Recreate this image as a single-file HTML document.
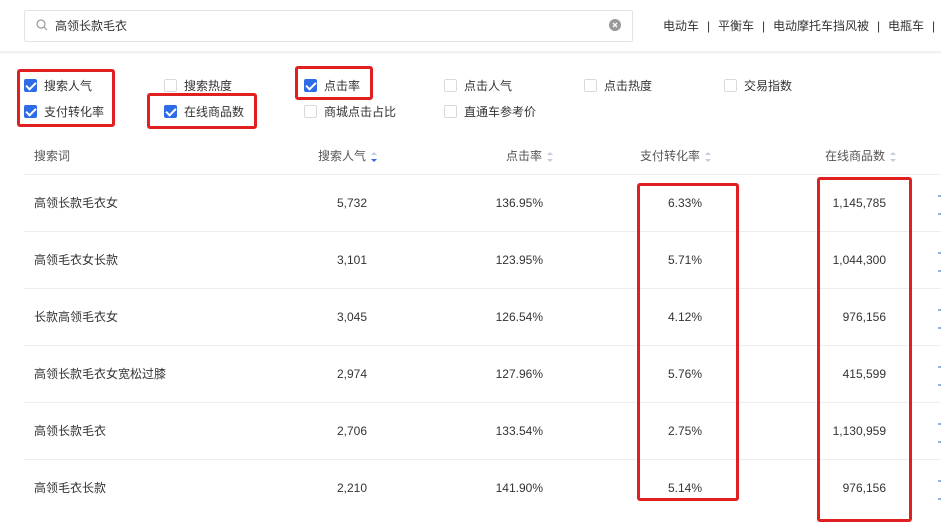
<!DOCTYPE html>
<html><head><meta charset="utf-8"><style>
*{margin:0;padding:0;box-sizing:border-box}
body{width:941px;height:516px;overflow:hidden;background:#fff;position:relative;font-family:"Liberation Sans","Noto Sans CJK SC",sans-serif;font-size:12px;color:#333}
.a{position:absolute;white-space:nowrap;line-height:16px}
.search{position:absolute;left:24px;top:10px;width:609px;height:32px;border:1px solid #e3e3e3;border-radius:2px}
.sh{position:absolute;left:0;top:51px;width:941px;height:3px;background:linear-gradient(#eee,#fafafa)}
.cb{position:absolute;width:13px;height:13px;border:1px solid #d9d9d9;border-radius:2px;background:#fff}
.cb.on{background:#2e6be6;border-color:#2e6be6}
.cb.on:after{content:"";position:absolute;left:3px;top:0px;width:4px;height:8px;border:solid #fff;border-width:0 2px 2px 0;transform:rotate(45deg)}
.red{position:absolute;border:3px solid #e02020;border-radius:3px}
.hl{position:absolute;left:24px;width:917px;height:1px;background:#eeeeee}
.r{text-align:right}
.sort{display:inline-block;width:6px;height:10px;vertical-align:middle;margin-left:5px;position:relative}
.sort:before{content:"";position:absolute;top:0;left:0;border:3px solid transparent;border-bottom:3px solid #c5cddb;border-top:0}
.sort:after{content:"";position:absolute;bottom:0;left:0;border:3px solid transparent;border-top:3px solid #c5cddb;border-bottom:0}
.sort.b:after{border-top-color:#2e6be6}
.blu{position:absolute;left:938px;width:3px;height:2px;background:#8fb1e8}
.sep{display:inline-block;width:19px;text-align:center}
</style></head><body>
<div class="search"></div>
<svg class="a" style="left:36px;top:19px" width="12" height="12" viewBox="0 0 12 12"><circle cx="5" cy="5" r="4" fill="none" stroke="#999" stroke-width="1.2"/><path d="M8 8l3 3" stroke="#999" stroke-width="1.2"/></svg>
<div class="a" style="left:55px;top:18px;color:#333">高领长款毛衣</div>
<svg class="a" style="left:609px;top:19px" width="12" height="12" viewBox="0 0 12 12"><circle cx="6" cy="6" r="6" fill="#999"/><path d="M4 4l4 4M8 4l-4 4" stroke="#fff" stroke-width="1.3"/></svg>
<div class="a" style="left:663px;top:18px;color:#333">电动车<span class="sep">|</span>平衡车<span class="sep">|</span>电动摩托车挡风被<span class="sep">|</span>电瓶车<span class="sep">|</span></div>
<div class="sh"></div>

<div class="cb on" style="left:24px;top:79px"></div><div class="a" style="left:44px;top:78px">搜索人气</div>
<div class="cb" style="left:164px;top:79px"></div><div class="a" style="left:184px;top:78px">搜索热度</div>
<div class="cb on" style="left:304px;top:79px"></div><div class="a" style="left:324px;top:78px">点击率</div>
<div class="cb" style="left:444px;top:79px"></div><div class="a" style="left:464px;top:78px">点击人气</div>
<div class="cb" style="left:584px;top:79px"></div><div class="a" style="left:604px;top:78px">点击热度</div>
<div class="cb" style="left:724px;top:79px"></div><div class="a" style="left:744px;top:78px">交易指数</div>
<div class="cb on" style="left:24px;top:105px"></div><div class="a" style="left:44px;top:104px">支付转化率</div>
<div class="cb on" style="left:164px;top:105px"></div><div class="a" style="left:184px;top:104px">在线商品数</div>
<div class="cb" style="left:304px;top:105px"></div><div class="a" style="left:324px;top:104px">商城点击占比</div>
<div class="cb" style="left:444px;top:105px"></div><div class="a" style="left:464px;top:104px">直通车参考价</div>

<div class="a" style="left:34px;top:148px;color:#555">搜索词</div>
<div class="a" style="left:318px;top:148px;color:#555">搜索人气<span class="sort b"></span></div>
<div class="a" style="left:506px;top:148px;color:#555">点击率<span class="sort"></span></div>
<div class="a" style="left:640px;top:148px;color:#555">支付转化率<span class="sort"></span></div>
<div class="a" style="left:825px;top:148px;color:#555">在线商品数<span class="sort"></span></div>

<div class="hl" style="top:174px"></div>
<div class="hl" style="top:231px"></div>
<div class="hl" style="top:288px"></div>
<div class="hl" style="top:345px"></div>
<div class="hl" style="top:402px"></div>
<div class="hl" style="top:459px"></div>

<div class="a" style="left:34px;top:195px">高领长款毛衣女</div><div class="a r" style="right:574px;top:195px">5,732</div><div class="a r" style="right:398px;top:195px">136.95%</div><div class="a r" style="right:239px;top:195px">6.33%</div><div class="a r" style="right:55px;top:195px">1,145,785</div>
<div class="a" style="left:34px;top:252px">高领毛衣女长款</div><div class="a r" style="right:574px;top:252px">3,101</div><div class="a r" style="right:398px;top:252px">123.95%</div><div class="a r" style="right:239px;top:252px">5.71%</div><div class="a r" style="right:55px;top:252px">1,044,300</div>
<div class="a" style="left:34px;top:309px">长款高领毛衣女</div><div class="a r" style="right:574px;top:309px">3,045</div><div class="a r" style="right:398px;top:309px">126.54%</div><div class="a r" style="right:239px;top:309px">4.12%</div><div class="a r" style="right:55px;top:309px">976,156</div>
<div class="a" style="left:34px;top:366px">高领长款毛衣女宽松过膝</div><div class="a r" style="right:574px;top:366px">2,974</div><div class="a r" style="right:398px;top:366px">127.96%</div><div class="a r" style="right:239px;top:366px">5.76%</div><div class="a r" style="right:55px;top:366px">415,599</div>
<div class="a" style="left:34px;top:423px">高领长款毛衣</div><div class="a r" style="right:574px;top:423px">2,706</div><div class="a r" style="right:398px;top:423px">133.54%</div><div class="a r" style="right:239px;top:423px">2.75%</div><div class="a r" style="right:55px;top:423px">1,130,959</div>
<div class="a" style="left:34px;top:480px">高领毛衣长款</div><div class="a r" style="right:574px;top:480px">2,210</div><div class="a r" style="right:398px;top:480px">141.90%</div><div class="a r" style="right:239px;top:480px">5.14%</div><div class="a r" style="right:55px;top:480px">976,156</div>

<div class="blu" style="top:195px"></div><div class="blu" style="top:213px"></div>
<div class="blu" style="top:252px"></div><div class="blu" style="top:270px"></div>
<div class="blu" style="top:309px"></div><div class="blu" style="top:327px"></div>
<div class="blu" style="top:366px"></div><div class="blu" style="top:384px"></div>
<div class="blu" style="top:423px"></div><div class="blu" style="top:441px"></div>
<div class="blu" style="top:480px"></div><div class="blu" style="top:498px"></div>

<div class="red" style="left:17px;top:69px;width:98px;height:58px"></div>
<div class="red" style="left:147px;top:93px;width:110px;height:36px"></div>
<div class="red" style="left:295px;top:66px;width:78px;height:34px"></div>
<div class="red" style="left:637px;top:183px;width:102px;height:318px"></div>
<div class="red" style="left:817px;top:177px;width:95px;height:345px"></div>
</body></html>
